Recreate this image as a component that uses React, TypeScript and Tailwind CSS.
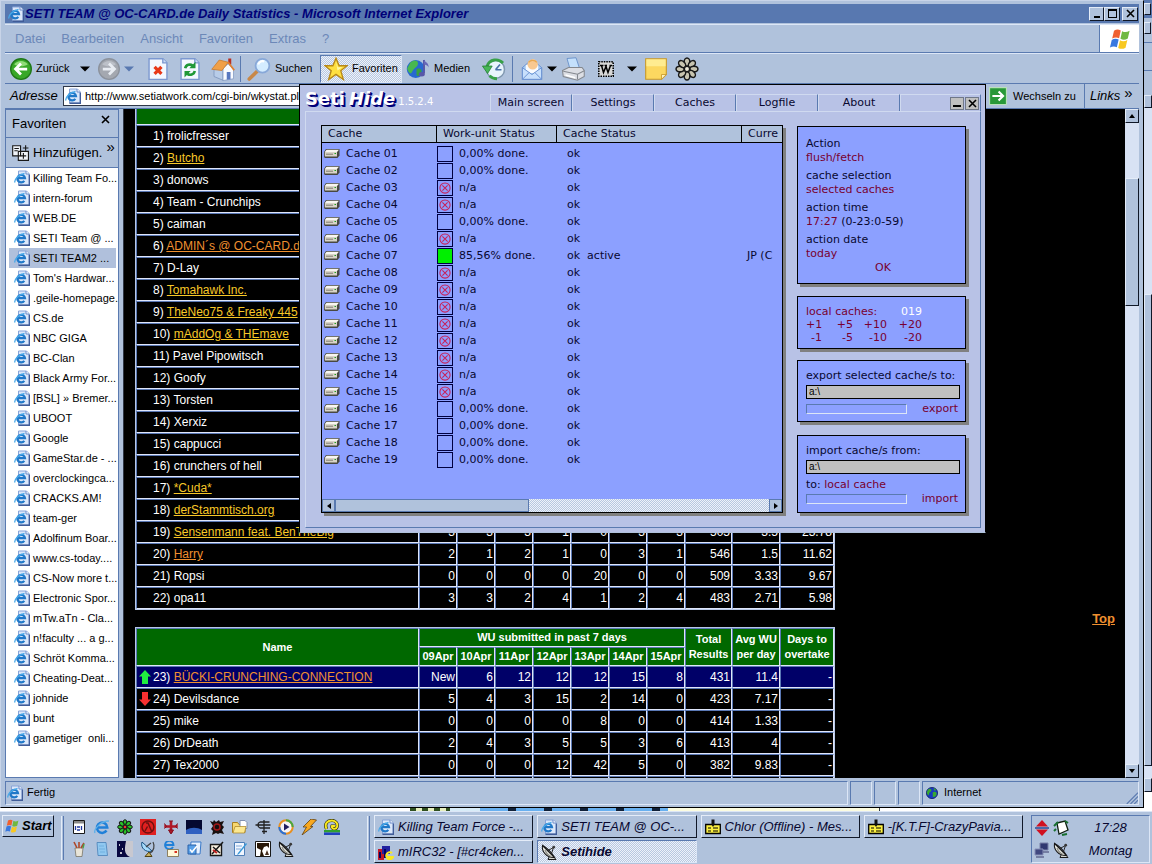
import type { ReactNode } from "react";

const favorites = [
  "Killing Team Fo...", "intern-forum", "WEB.DE", "SETI Team @ ...", "SETI TEAM2 ...", "Tom's Hardwar...",
  ".geile-homepage.", "CS.de", "NBC GIGA", "BC-Clan", "Black Army For...", "[BSL] » Bremer...", "UBOOT", "Google",
  "GameStar.de - ...", "overclockingca...", "CRACKS.AM!", "team-ger", "Adolfinum Boar...", "www.cs-today....",
  "CS-Now more t...", "Electronic Spor...", "mTw.aTn - Cla...", "n!faculty ... a g...", "Schröt Komma...",
  "Cheating-Deat...", "johnide", "bunt", "gametiger  onli...",
];

type Team = { name: string; link?: "yellow" | "orange"; values?: string[]; trend?: "up" | "down" };

const topTeams: Team[] = [
  { name: "frolicfresser" },
  { name: "Butcho", link: "yellow" },
  { name: "donows" },
  { name: "Team - Crunchips" },
  { name: "caiman" },
  { name: "ADMIN´s @ OC-CARD.de", link: "orange" },
  { name: "D-Lay" },
  { name: "Tomahawk Inc.", link: "yellow" },
  { name: "TheNeo75 & Freaky 445", link: "yellow" },
  { name: "mAddOg & THEmave", link: "yellow" },
  { name: "Pavel Pipowitsch" },
  { name: "Goofy" },
  { name: "Torsten" },
  { name: "Xerxiz" },
  { name: "cappucci" },
  { name: "crunchers of hell" },
  { name: "*Cuda*", link: "yellow" },
  { name: "derStammtisch.org", link: "yellow" },
  { name: "Sensenmann feat. BenTheBig", link: "yellow", values: ["3", "3", "3", "1", "0", "3", "3", "505", "3.5", "23.78"] },
  { name: "Harry", link: "orange", values: ["2", "1", "2", "1", "0", "3", "1", "546", "1.5", "11.62"] },
  { name: "Ropsi", values: ["0", "0", "0", "0", "20", "0", "0", "509", "3.33", "9.67"] },
  { name: "opa11", values: ["3", "3", "2", "4", "1", "2", "4", "483", "2.71", "5.98"] },
];

const nextTeams: Team[] = [
  { name: "BÜCKI-CRUNCHING-CONNECTION", link: "orange", trend: "up", values: ["New", "6", "12", "12", "12", "15", "8", "431", "11.4", "-"] },
  { name: "Devilsdance", trend: "down", values: ["5", "4", "3", "15", "2", "14", "0", "423", "7.17", "-"] },
  { name: "mike", values: ["0", "0", "0", "0", "8", "0", "0", "414", "1.33", "-"] },
  { name: "DrDeath", values: ["2", "4", "3", "5", "5", "3", "6", "413", "4", "-"] },
  { name: "Tex2000", values: ["0", "0", "0", "12", "42", "5", "0", "382", "9.83", "-"] },
  { name: "" },
];

const days = ["09Apr", "10Apr", "11Apr", "12Apr", "13Apr", "14Apr", "15Apr"];

// "done" caches have a fetched work unit, the others are n/a
const doneCaches = [1, 2, 5, 16, 17, 18, 19];

const cell = "border border-t-[#5a78b4] border-l-[#5a78b4] border-b-[#dfe6fa] border-r-[#dfe6fa] p-0";
const raised = "border border-t-[#e4ecf8] border-l-[#e4ecf8] border-b-[#101828] border-r-[#101828]";
const sunken = "border border-t-[#5a7ab0] border-l-[#5a7ab0] border-b-[#dce6f6] border-r-[#dce6f6]";
const dither = "bg-[repeating-conic-gradient(#eef2fa_0_25%,#b8c8e0_0_50%)] bg-[length:2px_2px]";

function Svg({ size = 16, children }: { size?: 10 | 12 | 16 | 18 | 22 | 24; children: ReactNode }) {
  return (
    <svg width={size} height={size} viewBox="0 0 16 16" className="shrink-0" aria-hidden="true">
      {children}
    </svg>
  );
}

function IePage() {
  return (
    <Svg>
      <path d="M4.500 1h8L15 3.500V15H4.500z" fill="#dce8fa" stroke="#88a4d8" />
      <path d="M4.500 15.300h11V4.500" fill="none" stroke="#405c98" strokeWidth="1.400" />
      <path d="M12 1v3h3" fill="#fff" stroke="#6888c8" />
      <path d="M10.300 10.900a3.800 3.800 0 1 1 .7-2.700H4.400" fill="none" stroke="#2078c8" strokeWidth="2.200" />
      <path d="M1 12.500C0 10 4 4.500 10.500 3.500" fill="none" stroke="#48a8e8" strokeWidth="1.300" />
    </Svg>
  );
}

function Caret({ color = "#000" }: { color?: string }) {
  return (
    <svg width="10" height="6" viewBox="0 0 10 6" className="shrink-0" aria-hidden="true">
      <path d="M0 .5h10L5 5.500z" fill={color} />
    </svg>
  );
}

function WindowsFlag({ size = 16 }: { size?: 16 | 24 }) {
  return (
    <Svg size={size}>
      <path d="M4 2.500c1.500-1 3-1 4.500-.2L7.400 7.500c-1.500-.8-3-.7-4.600.2z" fill="#f06030" />
      <path d="M9.400 2.800c1.700.9 3.200.8 5-.3l-1.200 5.200c-1.700 1-3.300 1-4.900.2z" fill="#70b840" />
      <path d="M2.500 8.600c1.600-1 3.100-1 4.600-.2l-1.200 5.100c-1.500-.8-3-.7-4.600.2z" fill="#3878e0" />
      <path d="M8 8.800c1.600.9 3.200.8 4.900-.2l-1.200 5.200c-1.700 1-3.300 1-4.900.2z" fill="#f8c820" />
    </Svg>
  );
}

function BackIcon() {
  return (
    <Svg size={22}>
      <circle cx="8" cy="8" r="7.500" fill="#38a828" stroke="#207818" />
      <path d="M3 4.500a6 5 0 0 1 10 0c-3 2-7 2-10 0z" fill="#90dc78" />
      <path d="M12.500 8H4.500M8 4L4 8l4 4" fill="none" stroke="#fff" strokeWidth="2" />
    </Svg>
  );
}

function ForwardIcon() {
  return (
    <Svg size={22}>
      <circle cx="8" cy="8" r="7.500" fill="#a4a8b0" stroke="#8c929c" />
      <path d="M3 4.500a6 5 0 0 1 10 0c-3 2-7 2-10 0z" fill="#bcc0c8" />
      <path d="M3.500 8h8M8 4l4 4-4 4" fill="none" stroke="#e8ecf2" strokeWidth="2" />
    </Svg>
  );
}

function StopIcon() {
  return (
    <Svg size={22}>
      <path d="M1.500 .5h10l3 3v12h-13z" fill="#f4f8ff" stroke="#7c98d0" />
      <path d="M11.500 .5v3h3" fill="#cddcf4" stroke="#7c98d0" />
      <path d="M5.500 6.500l5 5M10.500 6.500l-5 5" stroke="#e83818" strokeWidth="2.400" />
    </Svg>
  );
}

function RefreshIcon() {
  return (
    <Svg size={22}>
      <path d="M1.500 .5h10l3 3v12h-13z" fill="#f4f8ff" stroke="#7c98d0" />
      <path d="M11.500 .5v3h3" fill="#cddcf4" stroke="#7c98d0" />
      <path d="M4.500 7.500C5.200 4.600 8 4.200 10 5.500M11.500 9.500C10.800 12.400 8 12.800 6 11.500" fill="none" stroke="#209838" strokeWidth="1.900" />
      <path d="M12 2.800v4.700H7.500zM4 14.200V9.500h4.500z" fill="#209838" />
    </Svg>
  );
}

function HomeIcon() {
  return (
    <Svg size={24}>
      <path d="M11.500 1h2v4h-2z" fill="#b83020" />
      <path d="M2 8v5l6 2.500V8z" fill="#b8cce8" stroke="#7890b8" strokeWidth=".5" />
      <path d="M8 7.500l3.500-3 3.500 4v6l-7 1.200z" fill="#f8fbff" stroke="#8098c0" strokeWidth=".5" />
      <path d="M.5 8.200L5.500 2l6 1.500-4.200 5.500z" fill="#f0a048" stroke="#c87828" strokeWidth=".5" />
      <path d="M11.300 3.300l4.200 5.500" stroke="#e08030" strokeWidth="1.200" />
      <path d="M10.500 10h2.500v4.800l-2.500.4z" fill="#5878c0" />
    </Svg>
  );
}

function SearchIcon() {
  return (
    <Svg size={24}>
      <path d="M6.800 9.500L1.500 14.700" stroke="#c88848" strokeWidth="2.400" strokeLinecap="round" />
      <circle cx="10.300" cy="5.800" r="4.600" fill="#d4ecff" stroke="#88a8d8" strokeWidth="1.200" />
      <path d="M7.500 5a3 3 0 0 1 4-2" fill="none" stroke="#fff" strokeWidth="1.400" />
    </Svg>
  );
}

function StarIcon() {
  return (
    <Svg size={24}>
      <path d="M8 .8l2.100 5h5.300l-4.200 3.400 1.700 5.800L8 11.600 3.100 15l1.700-5.800L.6 5.800h5.300z" fill="#ffe040" stroke="#b88818" strokeWidth=".9" />
      <path d="M8 3l1.200 3.800h3L9 9z" fill="#fff8a8" />
    </Svg>
  );
}

function MediaIcon() {
  return (
    <Svg size={24}>
      <circle cx="6.500" cy="8" r="6" fill="#2868d0" />
      <path d="M3 3.500c3-2 5-1 5 1S5 7.500 4 10 1 9 .8 7.500z" fill="#48b850" />
      <path d="M7 8c3-1 4 1 3 3s-2.500 2-3 1z" fill="#38a040" />
      <path d="M12 2v9" stroke="#5858a8" strokeWidth="1.300" />
      <path d="M12 1.500c0 2 3.500 2 3 5.500-.5-1.500-2-2-3-2z" fill="#6868b8" />
      <ellipse cx="10.500" cy="11.500" rx="2" ry="1.500" fill="#5858a8" />
    </Svg>
  );
}

function HistoryIcon() {
  return (
    <Svg size={24}>
      <circle cx="9" cy="8.300" r="6" fill="#e8f4fc" stroke="#8098b0" />
      <path d="M9 8.500l3-3.500M9 8.500h4" stroke="#4870a8" strokeWidth="1.100" />
      <path d="M14 4C11 .8 5 1 3.200 6.500M5 12.500C6.500 14 8 14.500 10 14.500" fill="none" stroke="#38a048" strokeWidth="1.900" />
      <path d="M.3 6h6.500L3.700 11z" fill="#48b858" stroke="#207830" strokeWidth=".5" />
    </Svg>
  );
}

function MailIcon() {
  return (
    <Svg size={22}>
      <path d="M1 7l7-6 7 6v8.500H1z" fill="#a8ccf4" stroke="#6890d0" strokeWidth=".7" />
      <path d="M3.500 5h9v6h-9z" fill="#f8fbff" />
      <circle cx="8.500" cy="4.600" r="3.800" fill="#f8c890" />
      <path d="M5.500 3.200c1.500-2 4.500-2 6 0" fill="none" stroke="#e8a850" />
      <path d="M1 7l7 5 7-5v8.500H1z" fill="#c8e0fc" stroke="#6890d0" strokeWidth=".7" />
      <path d="M1 15.500l5-5M15 15.500l-5-5" stroke="#6890d0" strokeWidth=".7" />
    </Svg>
  );
}

function PrintIcon() {
  return (
    <Svg size={24}>
      <path d="M4 1l6-.5L12.500 8H6z" fill="#c4e0fc" stroke="#6890c8" strokeWidth=".6" />
      <path d="M1 9l4-2h9l1.500 2v4L11 15.500 1.500 13z" fill="#dcdee4" stroke="#84888f" strokeWidth=".7" />
      <path d="M1.500 9.500l9.500 2 4.500-2.300M11 11.500V15" fill="none" stroke="#84888f" strokeWidth=".7" />
      <path d="M3 12l6.500 1.800" stroke="#fff" />
    </Svg>
  );
}

function WordIcon() {
  return (
    <Svg>
      <path d="M.8 .8h14.400v14.400H.8z" fill="#d8d8d8" stroke="#000" strokeWidth="1.600" strokeDasharray="1.500 1" />
      <path d="M2 4.500h3.500M6.500 4.500H9M11.500 4.500h2.500M3.500 4.500l2 7L8 5.500l2 6 2.500-7" fill="none" stroke="#000" strokeWidth="1.500" />
    </Svg>
  );
}

function NoteIcon() {
  return (
    <Svg size={22}>
      <path d="M.5 .5h15v11.500L12 15.500H.5z" fill="#fcd860" stroke="#c89828" strokeWidth=".8" />
      <path d="M1 1h14v5H1z" fill="#ffec90" />
      <path d="M15.500 12H12v3.500z" fill="#fff4c0" stroke="#c89828" strokeWidth=".6" />
    </Svg>
  );
}

function FlowerIcon({ petal = "#c8c4b0", core = "#ece8d8", size = 24 }: { petal?: string; core?: string; size?: 16 | 24 }) {
  return (
    <Svg size={size}>
      {[0, 45, 90, 135, 180, 225, 270, 315].map((a) => (
        <ellipse key={a} cx="8" cy="3.400" rx="1.900" ry="2.700" fill={petal} stroke="#181818" strokeWidth="1" transform={`rotate(${a} 8 8)`} />
      ))}
      <circle cx="8" cy="8" r="1.700" fill={core} stroke="#181818" strokeWidth=".8" />
    </Svg>
  );
}

function GlobeIcon() {
  return (
    <Svg size={12}>
      <circle cx="8" cy="8" r="7.500" fill="#1838c0" stroke="#081860" />
      <path d="M3 3c3-2 5 0 4 2S4 7 4 10 1 9 1 7zM9 7c3-2 6 0 5 3s-3 4-5 3zM10 1l4 3-3 1z" fill="#38a830" />
    </Svg>
  );
}

function DishIcon() {
  return (
    <Svg>
      <path d="M9 11l-2 4.500h8L11 11" fill="#d8d8d0" stroke="#181818" />
      <path d="M1.500 1.500c-1 6 4 12.500 12 12z" fill="#f0f0e8" stroke="#181818" strokeWidth="1.100" />
      <path d="M1.500 1.500c4 2 9 7 12 12" fill="none" stroke="#181818" strokeWidth="1.200" />
      <path d="M4 6c1 3 3 5 6 6.500" fill="none" stroke="#909088" strokeWidth="1.300" />
      <path d="M7 6.500l5.500-3M10.500 9.500l2-6" stroke="#282828" />
      <circle cx="12.700" cy="3.200" r="1.400" fill="#383838" />
    </Svg>
  );
}

function ContactIcon() {
  return (
    <Svg>
      <path d="M.7 5.500h14.600v9H.7z" fill="#fcf040" stroke="#000" strokeWidth="1.300" />
      <path d="M3 9h3M8 9h5M3 12h3M8 12h5" stroke="#000" strokeWidth="1.200" />
      <path d="M6.500 .5h3v5L8 8 6.500 5.500z" fill="#101010" />
    </Svg>
  );
}

function DriveIcon() {
  return (
    <svg width="16" height="10" viewBox="0 0 16 10" className="shrink-0" aria-hidden="true">
      <path d="M2 0h13.500v6.500L13.500 9H1L0 8V3z" fill="#484840" />
      <path d="M2.500 .8H15L13 3H.8z" fill="#f8f6f0" />
      <path d="M.8 3H13v4.500H.8z" fill="#d8d4c8" />
      <path d="M2 5.200h7" stroke="#807c70" />
      <path d="M10.500 4.500h1.500" stroke="#20a020" />
    </svg>
  );
}

function Cross() {
  return (
    <svg width="9" height="9" viewBox="0 0 9 9" aria-hidden="true">
      <path d="M1 1l7 7M8 1L1 8" stroke="#000" strokeWidth="1.600" />
    </svg>
  );
}

// quick launch drawings, in bar order
const launchers: { label: string; icon: ReactNode }[] = [
  { label: "Kalender", icon: <Svg><path d="M2.500 1.500h11v13h-11z" fill="#fff" stroke="#181818" /><path d="M3 2h10v2.500H3z" fill="#888" /><path d="M4.500 7v4M6 8h3M6 11h3M10.500 7v4" stroke="#2038a0" strokeWidth="1.300" /></Svg> },
  { label: "Internet Explorer", icon: <Svg><path d="M12.500 11.500A5.200 5.200 0 1 1 13.300 8.500H4" fill="none" stroke="#2080d8" strokeWidth="2.500" /><path d="M1 14C-.5 11 6 2 15 2" fill="none" stroke="#60b0e8" strokeWidth="1.400" /></Svg> },
  { label: "ICQ", icon: <FlowerIcon size={16} petal="#28c028" core="#f83030" /> },
  { label: "Half-Life", icon: <Svg><path d="M0 0h16v16H0z" fill="#e02020" /><circle cx="8" cy="8" r="6" fill="none" stroke="#701010" strokeWidth="1.500" /><path d="M6 4h2l3.500 8M7.500 7.500L5 12" fill="none" stroke="#701010" strokeWidth="1.500" /></Svg> },
  { label: "RtCW", icon: <Svg><path d="M8 2v12M1.500 7.500h13" stroke="#b01828" strokeWidth="2.600" /><path d="M1.500 4.500l2 3-2 2M14.500 4.500l-2 3 2 2M6 2h4M5.500 11L8 15l2.500-4z" fill="#b01828" stroke="#801020" /></Svg> },
  { label: "SETI@home", icon: <Svg><path d="M0 1h16v14H0z" fill="#040830" /><path d="M0 11c5-3 11-3 16 0v4H0z" fill="#3060c0" /></Svg> },
  { label: "Diablo", icon: <Svg><path d="M1 2l3 1 1-2 2 2 3-2 1 2 4-1-2 4 2 2-2 3 2 4-4-1-2 1-2-1-4 2 1-4-2-2 2-3z" fill="#181010" /><circle cx="8" cy="8" r="3" fill="none" stroke="#a01818" strokeWidth="1.500" /></Svg> },
  { label: "Explorer", icon: <Svg><path d="M.5 3.500h5l1.500 2h6v8H.5z" fill="#f8d870" stroke="#a88020" /><path d="M8 1.500h5l2 2v6H8z" fill="#fff" stroke="#8090b0" /><path d="M1 14l2-6.500h11l-1.500 6.500z" fill="#fce890" stroke="#a88020" strokeWidth=".7" /></Svg> },
  { label: "Counter-Strike", icon: <Svg><path d="M14.500 3H5a3.200 3.200 0 0 0 0 6h10M9 1v14M.5 6h15M7 12.500h5" fill="none" stroke="#202020" strokeWidth="1.300" /></Svg> },
  { label: "Media Player", icon: <Svg><circle cx="8" cy="8" r="6.700" fill="#f4f4f8" stroke="#e89020" strokeWidth="2" /><path d="M8 1.300A6.700 6.700 0 0 1 14.700 8" fill="none" stroke="#48a840" strokeWidth="2" /><path d="M1.300 8A6.700 6.700 0 0 0 8 14.700" fill="none" stroke="#2870d8" strokeWidth="2" /><path d="M6 4.500l5.500 3.500L6 11.500z" fill="#202060" /></Svg> },
  { label: "Winamp", icon: <Svg><path d="M10 0L2 8h3.500L1 16l11-8.500H9.500L15.500 1z" fill="#f8a820" stroke="#604010" strokeWidth=".8" /></Svg> },
  { label: "Irfan", icon: <Svg><path d="M2.500 10C0 4 4 1.500 8 1.500S14 5 13 8s-6 2-5-1h3" fill="none" stroke="#282800" strokeWidth="3.200" /><path d="M2.500 10C0 4 4 1.500 8 1.500S14 5 13 8s-6 2-5-1h3" fill="none" stroke="#f8e820" strokeWidth="2" /><path d="M0 11h16v2.500H0z" fill="#30a030" /><path d="M0 13.500h16V16H0z" fill="#2040c0" /></Svg> },
  { label: "Paint", icon: <Svg><path d="M4 7h8l-1 8.500H5z" fill="#e8e4d8" stroke="#706858" strokeWidth=".7" /><path d="M6 7L3 1M8 7V1M10 7l3-5" stroke="#b04828" strokeWidth="1.600" /><path d="M12 7l1-4" stroke="#48a048" strokeWidth="1.400" /></Svg> },
  { label: "Notizbuch", icon: <Svg><path d="M3 1.500h9l1.500 13H4z" fill="#90c8f0" stroke="#4880b8" strokeWidth=".8" /><path d="M5 5h5M5 8h6M6 11h5" stroke="#70b0e0" /></Svg> },
  { label: "Cinema", icon: <Svg><path d="M0 0h16v16H0z" fill="#080840" /><path d="M9 0h7v16h-3C6 13 8 6 9 0z" fill="#c8c8d0" /><path d="M3 12h2M2 4h1M5 8h1" stroke="#fff" strokeWidth="1.500" /></Svg> },
  { label: "SetiSpy", icon: <Svg><path d="M5 15.500h7L9 11z" fill="#c8b060" stroke="#504010" /><path d="M2 1c-2 6 4 11 10 9z" fill="#a8dcfc" stroke="#185080" /><path d="M13 1c2 4 1 9-3 11M6 6l5-4" fill="none" stroke="#404040" strokeWidth="1.200" /></Svg> },
  { label: "Outlook Express", icon: <Svg><path d="M10 6A4.200 4.200 0 1 1 10.500 4H3" fill="none" stroke="#2080d8" strokeWidth="1.900" /><path d="M4.500 8.500h11v7h-11z" fill="#fff8d8" stroke="#786840" strokeWidth=".8" /><path d="M11.500 10h2.500v2h-2.500z" fill="#d83020" /></Svg> },
  { label: "Outlook", icon: <Svg><path d="M5 1h10l-1 12H4z" fill="#e8f2ff" stroke="#3878c8" /><path d="M2 4h8v9H2z" fill="#58a0e8" stroke="#2860a8" /><path d="M4 8.500l2 2.500 5-6" fill="none" stroke="#fff" strokeWidth="1.500" /></Svg> },
  { label: "WS_FTP", icon: <Svg><path d="M1.500 3.500h11v11h-11z" fill="#f8f0e0" stroke="#181818" strokeWidth="1.400" /><path d="M3 13L14 1M4 6l7 6" stroke="#181818" strokeWidth="1.500" /><path d="M4 9l4 3" stroke="#c02020" strokeWidth="2" /></Svg> },
  { label: "WordPad", icon: <Svg><path d="M2.500 1.500h10v13h-10z" fill="#f0f6ff" stroke="#5080b8" /><path d="M4 5h6M4 8h5" stroke="#80a8d8" /><path d="M14 2L6 12l-1 2 2-1 8-10z" fill="#3898d8" /></Svg> },
  { label: "Avatar", icon: <Svg><path d="M.5 .5h15v15H.5z" fill="#fff" stroke="#181818" /><path d="M2 2h12v5l-2-2-3 1-2 4 2 5H5l1-6-4-2z" fill="#281808" /><path d="M12 9l2 5h-4z" fill="#483020" /></Svg> },
  { label: "Seti Hide", icon: <DishIcon /> },
];

function ToolButton({ icon, label, children }: { icon: ReactNode; label: string; children?: ReactNode }) {
  return (
    <button type="button" aria-label={label} className="flex items-center gap-1 text-left">
      {icon}
      {children}
    </button>
  );
}

function StatsCols() {
  return (
    <colgroup>
      <col className="w-[283px]" />
      {days.map((d) => <col key={d} className="w-[38px]" />)}
      <col className="w-[47px]" />
      <col className="w-12" />
      <col className="w-[54px]" />
    </colgroup>
  );
}

function TeamRow({ team, rank }: { team: Team; rank: number }) {
  const values = team.values || Array.from({ length: 10 }, () => "");
  return (
    <tr className={`h-[22px] ${team.trend === "up" ? "bg-[#000068]" : "bg-black"}`}>
      <td className={cell}>
        <div className="flex items-center h-5">
          <span className="w-4 flex justify-center">
            {team.trend === "up" && <Svg><path d="M8 1l6 6.500h-3V15H5V7.500H2z" fill="#20f040" /></Svg>}
            {team.trend === "down" && <Svg><path d="M8 15l6-6.500h-3V1H5v7.500H2z" fill="#f83030" /></Svg>}
          </span>
          {team.name && (
            <span className="whitespace-nowrap">
              {rank}){" "}
              {team.link ? (
                <a href="#" className={`underline ${team.link === "yellow" ? "text-[#f8c828]" : "text-[#f09030]"}`}>{team.name}</a>
              ) : team.name}
            </span>
          )}
        </div>
      </td>
      {values.map((v, i) => <td key={i} className={`${cell} text-right pr-px`}>{v}</td>)}
    </tr>
  );
}

function StatsPage() {
  return (
    <div className="flex-1 min-w-0 overflow-hidden bg-black border-l border-[#303848] pl-[11px] text-xs text-white">
      <table className="table-fixed w-[698px] border-separate border-spacing-0 border border-[#b8c8e8] border-t-0">
        <StatsCols />
        <thead>
          <tr className="h-4 bg-[#006800]">
            {Array.from({ length: 11 }, (_, i) => <th key={i} className={`${cell} border-t-0`} />)}
          </tr>
        </thead>
        <tbody>
          {topTeams.map((t, i) => <TeamRow key={i} team={t} rank={i + 1} />)}
        </tbody>
      </table>
      <div className="h-[17px] flex items-center justify-end pr-[10px]">
        <a href="#" className="text-[13px] font-bold underline text-[#f09030]">Top</a>
      </div>
      <table className="table-fixed w-[698px] border-separate border-spacing-0 border border-[#b8c8e8]">
        <StatsCols />
        <thead className="bg-[#006800] text-[11px] leading-[15px] font-bold whitespace-nowrap">
          <tr className="h-[19px]">
            <th rowSpan={2} className={cell}>Name</th>
            <th colSpan={7} className={cell}>WU submitted in past 7 days</th>
            <th rowSpan={2} className={cell}>Total<br />Results</th>
            <th rowSpan={2} className={cell}>Avg WU<br />per day</th>
            <th rowSpan={2} className={cell}>Days to<br />overtake</th>
          </tr>
          <tr className="h-[19px]">
            {days.map((d) => <th key={d} className={cell}>{d}</th>)}
          </tr>
        </thead>
        <tbody>
          {nextTeams.map((t, i) => <TeamRow key={i} team={t} rank={i + 23} />)}
        </tbody>
      </table>
    </div>
  );
}

function Sidebar() {
  return (
    <aside className="w-[114px] shrink-0 flex flex-col border border-[#5a7ab0] mr-1 overflow-hidden whitespace-nowrap">
      <div className="h-7 shrink-0 flex items-center justify-between pl-[6px] pr-2 border-b border-[#5a7ab0] text-[13px]">
        <h2>Favoriten</h2>
        <button type="button" aria-label="Schließen" className="pb-2"><Cross /></button>
      </div>
      <div className="h-[30px] shrink-0 flex items-center gap-1 pl-[5px] border-b border-[#5a7ab0] text-[13px]">
        <Svg size={18}>
          <path d="M1.500 1.500h7v9h-7zM6.500 6.500h9v8h-9z" fill="#f0f4fa" stroke="#181818" />
          <path d="M3 4h4M3 6h3M11 8v5M8.500 10.500h5M13 1v5M10.500 3.500h5" stroke="#181818" />
        </Svg>
        <button type="button">Hinzufügen.</button>
        <span className="text-[15px] leading-none pb-3">»</span>
      </div>
      <ul className="flex-1 bg-white pl-[3px] pr-[2px] text-[11px]">
        {favorites.map((f) => (
          <li key={f} className={`h-5 flex items-center gap-[3px] pl-[5px] ${f === "SETI TEAM2 ..." ? "bg-[#b0c0dc]" : ""}`}>
            <IePage />
            <a href="#" className="whitespace-pre">{f}</a>
          </li>
        ))}
      </ul>
    </aside>
  );
}

function Scrollbar() {
  return (
    <div className="w-[14px] shrink-0 flex flex-col bg-[#d8e2f4]">
      <button type="button" aria-label="Nach oben" className={`h-[14px] flex items-center justify-center bg-[#b0c2dc] ${raised}`}>
        <svg width="6" height="4" viewBox="0 0 6 4"><path d="M3 0l3 4H0z" /></svg>
      </button>
      <div className="h-[55px]" />
      <div className={`h-32 bg-[#b0c2dc] ${raised}`} />
      <div className="flex-1" />
      <button type="button" aria-label="Nach unten" className={`h-[14px] flex items-center justify-center bg-[#b0c2dc] ${raised}`}>
        <svg width="6" height="4" viewBox="0 0 6 4"><path d="M3 4l3-4H0z" /></svg>
      </button>
    </div>
  );
}

function ExplorerWindow() {
  return (
    <div className="flex-1 min-w-0 flex flex-col bg-[#b0c2dc] border-t border-l border-r border-b border-t-[#c8d4e8] border-l-[#c8d4e8] border-r-black border-b-black pt-[3px] pl-1 pr-1">
      <header className="h-[19px] shrink-0 flex items-center bg-[#5878b0] text-[#000078] pl-[3px] pr-px">
        <IePage />
        <h1 className="flex-1 pl-px text-[13px] font-bold italic whitespace-nowrap">SETI TEAM @ OC-CARD.de Daily Statistics - Microsoft Internet Explorer</h1>
        <button type="button" aria-label="Minimieren" className={`w-[15px] h-[14px] flex items-end justify-center pb-[2px] bg-[#b0c2dc] ${raised}`}>
          <span className="w-[6px] h-[2px] bg-black" />
        </button>
        <button type="button" aria-label="Maximieren" className={`w-4 h-[14px] flex items-center justify-center bg-[#b0c2dc] ${raised}`}>
          <span className="w-[9px] h-[9px] border border-t-2 border-black" />
        </button>
        <button type="button" aria-label="Schließen" className={`w-4 h-[14px] ml-[2px] flex items-center justify-center bg-[#b0c2dc] ${raised}`}>
          <Cross />
        </button>
      </header>

      <nav className="h-[29px] shrink-0 mt-px flex items-center border-t border-[#dce6f6] border-b border-b-[#5a7ab0] text-[13px] text-[#6c88b8]">
        <div className="flex-1 flex gap-4 pl-[10px]">
          {["Datei", "Bearbeiten", "Ansicht", "Favoriten", "Extras", "?"].map((m) => <button key={m} type="button">{m}</button>)}
        </div>
        <div className="w-10 h-full bg-white border-l border-[#5a7ab0] flex items-center justify-center">
          <WindowsFlag size={24} />
        </div>
      </nav>

      <div className="h-[30px] shrink-0 flex items-center pl-[5px] text-[11px] border-t border-[#dce6f6]">
        <ToolButton icon={<BackIcon />} label="Zurück"><span className="w-10">Zurück</span><Caret /></ToolButton>
        <div className="w-2" />
        <ToolButton icon={<ForwardIcon />} label="Vorwärts"><Caret color="#5878b0" /></ToolButton>
        <div className="flex items-center gap-[10px] pl-[13px] pr-[5px]">
          <ToolButton icon={<StopIcon />} label="Abbrechen" />
          <ToolButton icon={<RefreshIcon />} label="Aktualisieren" />
          <ToolButton icon={<HomeIcon />} label="Startseite" />
        </div>
        <div className="w-px h-[26px] bg-[#5a7ab0] mr-[6px]" />
        <ToolButton icon={<SearchIcon />} label="Suchen"><span className="w-[45px]">Suchen</span></ToolButton>
        <button type="button" className={`w-[82px] h-[28px] flex items-center gap-1 pl-[3px] ${sunken} ${dither}`}>
          <StarIcon />
          Favoriten
        </button>
        <div className="w-1" />
        <ToolButton icon={<MediaIcon />} label="Medien"><span className="w-12">Medien</span></ToolButton>
        <ToolButton icon={<HistoryIcon />} label="Verlauf" />
        <div className="w-px h-[26px] bg-[#5a7ab0] ml-[6px] mr-2" />
        <ToolButton icon={<MailIcon />} label="E-Mail"><Caret /></ToolButton>
        <div className="flex items-center gap-[13px] pl-1">
          <ToolButton icon={<PrintIcon />} label="Drucken" />
          <ToolButton icon={<WordIcon />} label="Bearbeiten mit Word" />
          <Caret />
        </div>
        <div className="flex items-center gap-2 pl-2">
          <ToolButton icon={<NoteIcon />} label="Notizen" />
          <ToolButton icon={<FlowerIcon />} label="ICQ" />
        </div>
      </div>

      <div className="h-[26px] shrink-0 flex items-center border-t border-b border-[#5a7ab0] pl-[5px]">
        <label htmlFor="address" className="w-[53px] text-[13px] italic">Adresse</label>
        <div className="flex-1 h-5 flex items-center bg-white border border-[#303848] pl-px">
          <IePage />
          <input id="address" readOnly value="http://www.setiatwork.com/cgi-bin/wkystat.pl" className="flex-1 pl-1 text-[11px] outline-none" />
        </div>
        <button type="button" className="w-[99px] flex items-center gap-[6px] pl-1 text-[11px] whitespace-nowrap">
          <Svg size={18}>
            <path d="M.5 .5h15v15H.5z" fill="#289838" stroke="#b8e0b8" />
            <path d="M3 8h9M8.500 4l4 4-4 4" fill="none" stroke="#fff" strokeWidth="1.900" />
          </Svg>
          Wechseln zu
        </button>
        <div className="w-[55px] h-full flex items-center gap-1 pl-[5px] border-l border-[#5a7ab0] text-[13px] italic">
          <a href="#">Links</a>
          <span className="text-[15px] leading-none pb-2 not-italic">»</span>
        </div>
      </div>

      <main className="flex-1 min-h-0 flex">
        <Sidebar />
        <StatsPage />
        <Scrollbar />
      </main>

      <footer className="h-[27px] shrink-0 flex items-center gap-[2px] my-px text-[11px]">
        <div className={`flex-1 h-6 flex items-center gap-1 pl-px ${sunken}`}>
          <IePage />
          Fertig
        </div>
        <div className={`w-[22px] h-6 ${sunken}`} />
        <div className={`w-[22px] h-6 ${sunken}`} />
        <div className={`w-[22px] h-6 ${sunken}`} />
        <div className={`w-[217px] h-6 flex items-center gap-[6px] pl-[3px] ${sunken}`}>
          <GlobeIcon />
          <span className="flex-1">Internet</span>
          <span className="self-end">
            <Svg size={12}><path d="M1 16L16 1M6 16L16 6M11 16l5-5" stroke="#5a7ab0" strokeWidth="1.500" /></Svg>
          </span>
        </div>
      </footer>
    </div>
  );
}

// sliver of the maximised window behind the browser
function BackgroundWindow() {
  return (
    <div className="w-2 shrink-0 flex flex-col bg-[#b0c2dc]">
      <div className="h-[18px] bg-[#5878b0] pt-[3px]"><div className={`w-[7px] h-3 bg-[#b0c2dc] ${raised}`} /></div>
      <div className={`w-[7px] h-3 mt-1 ${raised}`} />
      <div className="h-[9px] border-b border-[#5a7ab0]" />
      <div className="h-7 border-b border-[#5a7ab0]" />
      <div className="h-6" />
      <div className={`h-[13px] ${raised}`} />
      <div className="h-[186px] bg-[#d8e2f4]" />
      <div className={`flex-1 ${raised}`} />
      <div className="h-3 bg-[#d8e2f4]" />
      <div className={`h-[14px] ${raised}`} />
      <div className="h-4 bg-white" />
    </div>
  );
}

function Panel({ className, children }: { className: string; children: ReactNode }) {
  return <section className={`bg-[#8ca0ff] border border-black shadow-[3px_3px_0_#808080] pl-2 pr-[5px] ${className}`}>{children}</section>;
}

function CacheRow({ n }: { n: number }) {
  const active = n === 7;
  const done = doneCaches.includes(n);
  return (
    <tr className="h-[17px]">
      <td className="p-0">
        <div className="flex items-center gap-[6px] pl-[2px]"><DriveIcon />Cache {String(n).padStart(2, "0")}</div>
      </td>
      <td className="p-0">
        <div className="flex items-center gap-[6px]">
          <span className={`w-4 h-4 border border-[#000040] flex items-center justify-center ${active ? "bg-[#00f000]" : ""}`}>
            {!done && !active && (
              <Svg size={12}>
                <circle cx="8" cy="8" r="6.800" fill="none" stroke="#c82058" strokeWidth="1.400" />
                <path d="M4.500 4.500l7 7M11.500 4.500l-7 7" stroke="#c82058" strokeWidth="1.400" />
              </Svg>
            )}
          </span>
          {active ? "85,56% done." : done ? "0,00% done." : "n/a"}
        </div>
      </td>
      <td className="p-0 pl-[10px] whitespace-pre">{active ? "ok  active" : "ok"}</td>
      <td className="p-0 pl-[5px]">{active && "JP (C"}</td>
    </tr>
  );
}

function CacheList() {
  const head = "h-[17px] bg-[#b0c2dc] border-b border-r border-black p-0 pl-[6px] text-left font-normal";
  return (
    <div className="flex-1 min-w-0 flex flex-col border border-black bg-[#8ca0ff] shadow-[3px_3px_0_#808080]">
      <div className="flex-1 overflow-hidden">
        <table className="table-fixed w-full border-separate border-spacing-0 whitespace-nowrap">
          <colgroup>
            <col className="w-[115px]" />
            <col className="w-[120px]" />
            <col className="w-[185px]" />
            <col />
          </colgroup>
          <thead>
            <tr>
              <th className={head}>Cache</th>
              <th className={head}>Work-unit Status</th>
              <th className={head}>Cache Status</th>
              <th className={`${head} border-r-0 overflow-hidden`}>Curre</th>
            </tr>
          </thead>
          <tbody>
            <tr className="h-[2px]"><td colSpan={4} className="p-0" /></tr>
            {Array.from({ length: 19 }, (_, i) => <CacheRow key={i} n={i + 1} />)}
          </tbody>
        </table>
      </div>
      <div className={`h-[13px] flex ${dither}`}>
        <button type="button" aria-label="Nach links" className="w-[13px] border border-[#5a7ab0] bg-[#b0c2dc] flex items-center justify-center">
          <svg width="4" height="6" viewBox="0 0 4 6"><path d="M4 0v6L0 3z" /></svg>
        </button>
        <div className="w-[194px] border border-[#5a7ab0] bg-[#b0c2dc]" />
        <div className="flex-1" />
        <button type="button" aria-label="Nach rechts" className="w-[13px] border border-[#5a7ab0] bg-[#b0c2dc] flex items-center justify-center">
          <svg width="4" height="6" viewBox="0 0 4 6"><path d="M0 0v6l4-3z" /></svg>
        </button>
      </div>
    </div>
  );
}

function ActionPair({ label, value, note }: { label: string; value: string; note?: string }) {
  return (
    <div className="pb-1">
      <div>{label}</div>
      <div><button type="button" className="text-[#780030]">{value}</button>{note && ` ${note}`}</div>
    </div>
  );
}

function TransferRow({ label }: { label: string }) {
  return (
    <div className="flex items-center justify-between pr-[2px]">
      <div className={`w-[101px] h-[10px] ${sunken}`} />
      <button type="button" className="text-[#780030] leading-[14px]">{label}</button>
    </div>
  );
}

function SetiHideWindow() {
  const path = "w-full h-[14px] px-[2px] border border-black bg-[#c0c0c0] text-[10px] font-['Liberation_Sans'] text-black outline-none block";
  return (
    <div className="absolute left-[299px] top-[84px] w-[687px] bg-[#b8c2e6] border border-black border-b-[#b0c2dc] pl-[5px] pr-1 pb-1 font-['DejaVu_Sans',sans-serif] text-[11px] leading-[14px] text-[#080830]">
      <div className="flex items-end h-[26px]">
        <div className="w-[185px] flex items-baseline gap-[3px] text-white">
          <h2 className="text-lg leading-6 font-bold [text-shadow:1px_1px_0_#000078,2px_2px_0_#000078]">Seti<i className="pl-1">Hide</i></h2>
          <span className="text-[10px]">1.5.2.4</span>
        </div>
        {["Main screen", "Settings", "Caches", "Logfile", "About"].map((t) => (
          <button key={t} type="button" className="w-[82px] h-[17px] border-t border-l border-r border-t-[#d0daf0] border-l-[#d0daf0] border-r-[#5a7ab0] whitespace-nowrap">{t}</button>
        ))}
        <div className="flex-1 h-[17px] flex justify-end items-center gap-px pr-px border border-b-0 border-t-[#d0daf0] border-l-[#d0daf0] border-r-[#5a7ab0]">
          <button type="button" aria-label="Minimieren" className="w-[14px] h-[13px] bg-[#c0c0c0] border border-[#707888] flex items-end justify-center pb-[2px]">
            <span className="w-2 h-[2px] bg-black" />
          </button>
          <button type="button" aria-label="Schließen" className="w-[14px] h-[13px] bg-[#c0c0c0] border border-[#707888] flex items-center justify-center"><Cross /></button>
        </div>
      </div>
      <div className="flex gap-[14px] pt-[13px] pb-[14px] pl-[15px] pr-[14px] border border-t-[#d0daf0] border-l-[#d0daf0] border-r-[#5a7ab0] border-b-[#5a7ab0]">
        <CacheList />
        <div className="w-[169px] shrink-0 flex flex-col pt-px">
          <Panel className="pt-[10px] pb-2">
            <ActionPair label="Action" value="flush/fetch" />
            <ActionPair label="cache selection" value="selected caches" />
            <ActionPair label="action time" value="17:27" note="(0-23:0-59)" />
            <div>action date</div>
            <div><button type="button" className="text-[#780030]">today</button></div>
            <button type="button" className="block mx-auto text-[#780030]">OK</button>
          </Panel>
          <Panel className="mt-3 pt-2 pb-1 leading-[13px] text-[#780030]">
            <div className="flex justify-between w-[116px]">local caches: <span className="text-white">019</span></div>
            {["+", "-"].map((sign) => (
              <div key={sign} className="grid grid-cols-[16px_31px_34px_35px] w-[116px]">
                {[1, 5, 10, 20].map((step) => <button key={step} type="button" className="text-right">{sign}{step}</button>)}
              </div>
            ))}
          </Panel>
          <Panel className="mt-[11px] pt-2 pb-[5px]">
            <label htmlFor="export" className="block whitespace-nowrap pb-[2px]">export selected cache/s to:</label>
            <input id="export" defaultValue="a:\" className={path} />
            <div className="pt-[3px]"><TransferRow label="export" /></div>
          </Panel>
          <Panel className="mt-[13px] pt-2 pb-[6px]">
            <label htmlFor="import" className="block whitespace-nowrap pb-[2px]">import cache/s from:</label>
            <input id="import" defaultValue="a:\" className={path} />
            <div className="pt-1">to: <button type="button" className="text-[#780030]">local cache</button></div>
            <TransferRow label="import" />
          </Panel>
        </div>
      </div>
    </div>
  );
}

function TaskButton({ icon, label, pressed }: { icon: ReactNode; label: string; pressed?: boolean }) {
  return (
    <button
      type="button"
      className={`h-[23px] flex items-center gap-1 px-[3px] whitespace-nowrap overflow-hidden ${pressed ? `font-bold ${sunken} ${dither}` : raised}`}
    >
      {icon}
      {label}
    </button>
  );
}

function Taskbar() {
  return (
    <div className="h-[53px] shrink-0 flex items-start pt-[3px] pl-[2px] pr-[2px] bg-[#b0c2dc] border-t border-[#dce6f6] text-[13px] italic text-[#080830]">
      <button type="button" className={`w-[52px] h-[22px] flex items-center gap-[2px] pl-px font-bold text-black ${raised}`}>
        <WindowsFlag />
        Start
      </button>
      <div className="w-[3px] h-11 ml-[7px] mt-px border-l border-r border-l-[#e4ecf8] border-r-[#5a7ab0]" />
      <div className="w-[276px] ml-[3px] flex flex-wrap gap-y-[6px] pt-1">
        {launchers.map((l) => (
          <button key={l.label} type="button" aria-label={l.label} className="w-[23px] h-4 flex justify-center">{l.icon}</button>
        ))}
      </div>
      <div className="w-[3px] h-11 ml-6 mt-px border-l border-r border-l-[#e4ecf8] border-r-[#5a7ab0]" />
      <div className="flex-1 min-w-0 grid grid-cols-4 gap-x-1 gap-y-[2px] ml-1 mr-2">
        <TaskButton icon={<IePage />} label="Killing Team Force -..." />
        <TaskButton icon={<IePage />} label="SETI TEAM @ OC-..." />
        <TaskButton icon={<ContactIcon />} label="Chlor (Offline) - Mes..." />
        <TaskButton icon={<ContactIcon />} label="-[K.T.F]-CrazyPavia..." />
        <TaskButton
          icon={<Svg><path d="M0 5h6v11H0z" fill="#c01828" /><path d="M4 2h8v8H4z" fill="#2020a0" /><path d="M6 5h2v9H6zM1 8h2v6H1z" fill="#000060" /><path d="M14 9a3.500 3.500 0 1 0 1 4H9" fill="none" stroke="#f8e820" strokeWidth="2" /></Svg>}
          label="mIRC32 - [#cr4cken..."
        />
        <TaskButton icon={<DishIcon />} label="Setihide" pressed />
      </div>
      <div className={`w-[119px] h-12 flex ${sunken}`}>
        <div className="grid grid-cols-2 content-around w-10 pl-[2px] py-px">
          <Svg><path d="M8 0l6 6.500H2z" fill="#d01020" /><path d="M8 16l6-6.500H2z" fill="#d01020" /><path d="M1 8h14" stroke="#284898" strokeWidth="1.500" /></Svg>
          <Svg><path d="M4 3l8-2 3 9-9 4z" fill="#fff" stroke="#102010" strokeWidth="1.300" /><path d="M1 6l4-4M3 9l-2 2M9 15l5-1M12 1l3 2" stroke="#187030" strokeWidth="2" /></Svg>
          <Svg><path d="M6 1h8v7H6z" fill="#303870" stroke="#7880a8" /><path d="M1 7h8v6H1z" fill="#404880" stroke="#8890b8" /><path d="M2 15h8M9 10h6" stroke="#606890" strokeWidth="1.500" /></Svg>
          <DishIcon />
        </div>
        <div className="flex-1 flex flex-col justify-around items-center">
          <time>17:28</time>
          <span>Montag</span>
        </div>
      </div>
    </div>
  );
}

export default function App() {
  return (
    <div className="relative h-screen flex flex-col overflow-hidden bg-white font-['Liberation_Sans',Arial,sans-serif] text-black">
      <div className="flex-1 min-h-0 flex">
        <ExplorerWindow />
        <BackgroundWindow />
      </div>
      <div className="h-[3px] shrink-0 flex">
        <div className="w-[410px]" />
        <div className="w-[40px] bg-[repeating-linear-gradient(90deg,#305020_0_6px,#e8f0c0_6px_12px)]" />
        <div className="w-[30px] bg-[#d8ecf8]" />
        <div className="w-[188px] bg-[repeating-linear-gradient(90deg,#68b0f0_0_28px,#102038_28px_36px)]" />
        <div className="w-[212px] bg-[#fcfce0] border-r border-[#303848]" />
      </div>
      <SetiHideWindow />
      <Taskbar />
    </div>
  );
}
